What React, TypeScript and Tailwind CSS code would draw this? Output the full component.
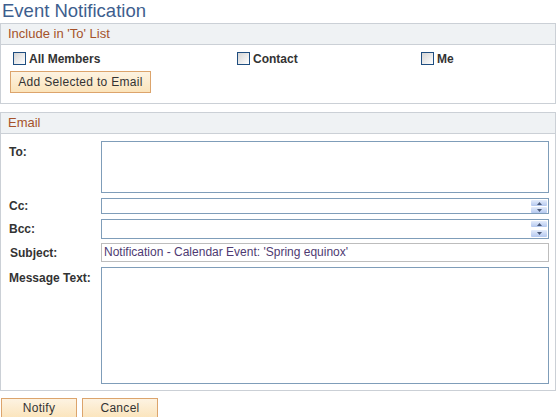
import React from 'react';

const Checkbox = () => (
  <span className="inline-block w-[13px] h-[13px] border border-[#1f4e80] bg-gradient-to-br from-[#d4d4d4] to-white shrink-0" />
);

const Spinner = ({ tall }: { tall?: boolean }) => (
  <div className={`absolute right-[1px] top-[1px] w-[16px] flex flex-col ${tall ? 'gap-[3px]' : 'gap-[1px]'}`}>
    <div className="h-[6px] rounded-[1px] bg-gradient-to-b from-[#e4ecfb] to-[#b4c8ef] flex items-center justify-center">
      <svg width="5" height="3" viewBox="0 0 5 3">
        <path d="M2.5 0 L5 3 L0 3 Z" fill="#4a5a7a" />
      </svg>
    </div>
    <div className={`${tall ? 'h-[7px]' : 'h-[6px]'} rounded-[1px] bg-gradient-to-b from-[#e4ecfb] to-[#b4c8ef] flex items-center justify-center`}>
      <svg width="5" height="3" viewBox="0 0 5 3">
        <path d="M0 0 L5 0 L2.5 3 Z" fill="#4a5a7a" />
      </svg>
    </div>
  </div>
);

const PsButton = ({ children, className = '' }: { children: React.ReactNode; className?: string }) => (
  <button
    className={`h-[21px] border border-[#dca46c] bg-gradient-to-b from-[#fdf3e2] to-[#fbe4bb] text-[12px] leading-[19px] text-[#333] tracking-[0.3px] ${className}`}
  >
    {children}
  </button>
);

const SectionHeader = ({ title }: { title: string }) => (
  <div className="h-[21px] bg-[#eff2f4] border-b border-[#cbd0d6] pl-[7px] text-[13px] leading-[20px] text-[#a5522a]">
    {title}
  </div>
);

export default function App() {
  return (
    <div className="w-[557px] h-[417px] bg-white overflow-hidden font-['Liberation_Sans',Arial,sans-serif] text-[12px] text-[#333]">
      <h1 className="h-[23px] pl-[2px] text-[18.5px] leading-[21px] text-[#3d5e8e]">Event Notification</h1>

      {/* Include in 'To' List */}
      <section className="w-[556px] border border-[#cbd0d6]">
        <SectionHeader title="Include in 'To' List" />
        <div className="pt-[7px] pb-[10px] pl-[12px]">
          <div className="flex items-center h-[13px] font-bold">
            <label className="flex items-center gap-[3px] w-[224px]">
              <Checkbox />
              <span>All Members</span>
            </label>
            <label className="flex items-center gap-[3px] w-[184px]">
              <Checkbox />
              <span>Contact</span>
            </label>
            <label className="flex items-center gap-[3px]">
              <Checkbox />
              <span>Me</span>
            </label>
          </div>
          <PsButton className="mt-[6px] -ml-[3px] w-[141px] h-[22px] leading-[20px]">Add Selected to Email</PsButton>
        </div>
      </section>

      {/* Email */}
      <section className="mt-[8px] w-[556px] border border-[#cbd0d6]">
        <SectionHeader title="Email" />
        <div className="pt-[7px] pb-[6px] pl-[8px] pr-[6px] flex flex-col font-bold">
          <div className="flex">
            <div className="w-[92px] pt-[4px] leading-[14px]">To:</div>
            <div className="w-[448px] h-[52px] border border-[#7f9db9]" />
          </div>
          <div className="flex items-center mt-[4px]">
            <div className="w-[92px]">Cc:</div>
            <div className="relative w-[448px] h-[16px] border border-[#7f9db9]">
              <Spinner />
            </div>
          </div>
          <div className="flex items-center mt-[4px]">
            <div className="w-[92px]">Bcc:</div>
            <div className="relative w-[448px] h-[20px] border border-[#7f9db9]">
              <Spinner tall />
            </div>
          </div>
          <div className="flex items-center mt-[4px]">
            <div className="w-[92px] pl-[1px]">Subject:</div>
            <div className="w-[448px] h-[19px] border border-[#bdbdbd] pl-[2px] leading-[17px] font-normal text-[#4e3a72]">
              Notification - Calendar Event: 'Spring equinox'
            </div>
          </div>
          <div className="flex mt-[5px]">
            <div className="w-[92px] pt-[4px] leading-[14px]">Message Text:</div>
            <div className="w-[448px] h-[117px] border border-[#7f9db9]" />
          </div>
        </div>
      </section>

      <div className="mt-[7px] pl-[1px] flex gap-[5px]">
        <PsButton className="w-[76px]">Notify</PsButton>
        <PsButton className="w-[76px]">Cancel</PsButton>
      </div>
    </div>
  );
}
